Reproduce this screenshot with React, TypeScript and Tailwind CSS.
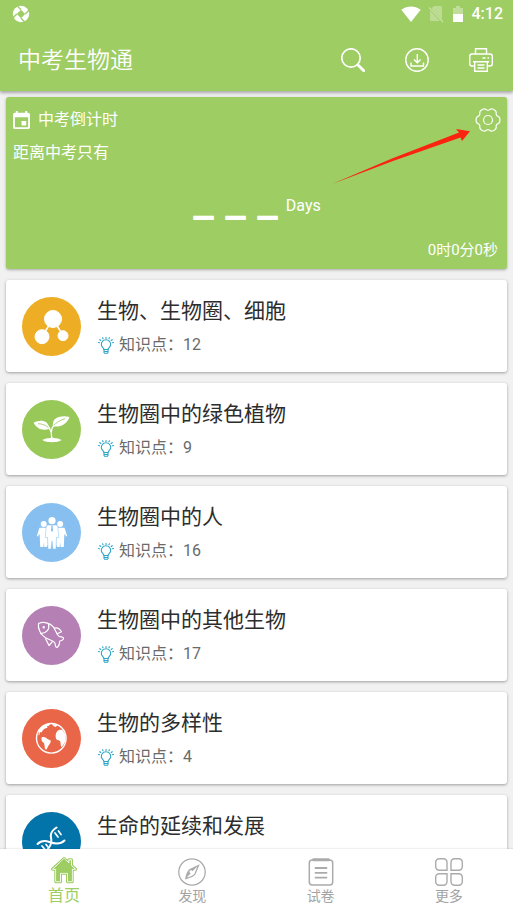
import type { ReactNode } from 'react';
import { MdSignalWifi4Bar } from 'react-icons/md';

type Topic = {
  title: string;
  count?: number;
  color: string;
  art: ReactNode;
};

const topics: Topic[] = [
  {
    title: '生物、生物圈、细胞',
    count: 12,
    color: 'bg-[#edad24]',
    art: (
      <g fill="#fff" stroke="#fff">
        <path d="M31 22 20 39.500M31 22l10 16.500" strokeWidth="1.500" />
        <circle cx="31" cy="22" r="8.500" />
        <circle cx="20" cy="39.700" r="7" />
        <circle cx="41" cy="38.700" r="5" />
      </g>
    ),
  },
  {
    title: '生物圈中的绿色植物',
    count: 9,
    color: 'bg-[#98c858]',
    art: (
      <g fill="#fff">
        <path d="M11.500 22.700C16 20 21.500 20 24.500 22.500c2 1.800 2.300 4 3.800 6C20 31.500 15 28.500 11.500 22.700z" />
        <path d="M47.500 17C42 15.600 35.500 16.500 32.500 19.600 30.700 21.600 31 24 30.800 26.400 39 27.500 45 24 47.500 17z" />
        <path d="M16 23.700c4.500 0 9 1.800 12 5.500M43 18.700c-5 1.500-9 4-12 7.300" fill="none" stroke="#98c858" strokeWidth=".8" />
        <path d="M26.500 27.500c2 1.500 3 3.500 3.200 10.500M32.500 25c-2 1.500-3 4-3 7" fill="none" stroke="#fff" strokeWidth="1.300" />
        <path d="M20.300 40c2-1.300 5-2 8-2l1.500-1 1.800 1c3 0 6 .8 8 2-4 3-15 3-19.300 0z" />
      </g>
    ),
  },
  {
    title: '生物圈中的人',
    count: 16,
    color: 'bg-[#87c0f0]',
    art: (
      <g fill="#fff">
        <circle cx="21.700" cy="21" r="3" />
        <circle cx="38.200" cy="21" r="3" />
        <path d="M17.500 24.700h6.500l.5 8.800 1.300 2V42l-1.200 2h-2.300l-.3-5-.6 5h-3.200l-.5-12-.7-1-1 2.500-1.200-.6z" />
        <path d="M42.500 24.700H36l-.5 8.800-1.300 2V42l1.200 2h2.300l.3-5 .6 5h3.200l.5-12 .7-1 1 2.500 1.200-.6z" />
        <path
          d="M26.300 22h7.400c1.500 0 2 1 2.200 2l.8 10.500h-2.300L34 46h-3l-1-8-1 8h-3l-.4-11.500h-2.300L24.100 24c.2-1 .7-2 2.200-2z"
          stroke="#87c0f0"
          strokeWidth=".5"
        />
        <circle cx="30" cy="17.700" r="3.600" />
        <path d="m29.400 22.500.6-.5.600.5.4 5-1 1.500-1-1.500z" fill="#87c0f0" />
      </g>
    ),
  },
  {
    title: '生物圈中的其他生物',
    count: 17,
    color: 'bg-[#b581b5]',
    art: (
      <g fill="none" stroke="#fff" strokeWidth="1.200" strokeLinejoin="round" strokeLinecap="round">
        <path d="M16.500 17.500c5-2.200 11.500-.7 14.800 3.300 2.200 3 3 6.500 5.200 9 1.400 1.500 4 .7 5 2.200.5 1.500-1.500 2.500-3.500 3-1 .5-.2 1.800-.7 3-.5 1.500-1.500 3.500-2.800 3.300-1.700-.3-.7-3.500-2-5-2.300-2.300-6-2.800-9-4.600-4.600-3-8-9-7-14.200z" />
        <path d="M26.500 18.500c1.500 4.500-2 8.700-7.800 9.200" />
        <path d="M32.500 22c2.500-.7 5.200.5 7 3.800l-4.300 2M23.700 33l3.300 6.500 3.200-3.600" />
        <circle cx="21.700" cy="21.300" r=".6" fill="#fff" />
      </g>
    ),
  },
  {
    title: '生物的多样性',
    count: 4,
    color: 'bg-[#ea6648]',
    art: (
      <g fill="#fff">
        <circle cx="29.300" cy="29.300" r="14.800" fill="none" stroke="#fff" strokeWidth="1.400" />
        <path d="M17 21c2.500-4 6-6 11-6.300l-1 2-2 .6.500 1.500-2.500.7-2 1.500-1.500 2.500-1.500-.5-.7 3-.8.200z" />
        <path d="M19.500 28.500c2-1 4.500-.2 5.500 1.300l3.700 1.700c.5 2.200-1.600 3.700-2.400 5.500l-1.800 3.500-1.500-.5-.8-5.500-2.500-2.500z" />
        <path d="M35 22.500c1.300-1.800 3.500-2.300 5.500-1.500l2.500 4 .5 5.500c-.5 3-2 5.500-4 7.500-1.300-1.500-.5-4-1.500-6-1-1-3.200-.5-4-2.200-.8-2.500-.3-5.500 1-7.300z" />
        <path d="m30 15 4 .6 1.500 1-2 1.400-2.200-1z" />
      </g>
    ),
  },
  {
    title: '生命的延续和发展',
    color: 'bg-[#0374aa]',
    art: (
      <g fill="none" stroke="#fff" strokeWidth="2" strokeLinecap="round">
        <path d="M15.500 32c4-4 8-3.500 12-2 5.500 2 10.500 3 15-1.500" />
        <path d="M34.500 15.500c-4.500 3-6.500 6-5.500 10 .8 4 .5 8.500-4.500 13" />
        <path d="m33 21 3 4M36.500 19l2.500 3.500M20 34l3.500 4M24 32.500l2 2.500" strokeWidth="1.700" />
      </g>
    ),
  },
];

// six soft lobes around the centre
const gearPath =
  Array.from({ length: 90 }, (_, i) => {
    const a = (i * Math.PI) / 45;
    const r = 11.1 + 1.1 * Math.cos(6 * a) - 0.3 * Math.cos(12 * a);
    return `${i ? 'L' : 'M'}${(13 + r * Math.cos(a)).toFixed(2)} ${(13 + r * Math.sin(a)).toFixed(2)}`;
  }).join('') + 'z';

function StatusBar() {
  return (
    <div className="flex h-7 items-center justify-between pr-[10px] pl-3">
      <svg viewBox="0 0 18 18" className="size-[18px]">
        <circle cx="9" cy="9" r="8.200" fill="#fff" />
        <path d="M9 4.800 13.200 9 9 13.200 4.800 9z" fill="#9ecd64" />
        <path
          d="M9 4.800 4.500.300M13.200 9l4.500-4.500M9 13.200l4.500 4.500M4.800 9 .300 13.500"
          fill="none"
          stroke="#9ecd64"
          strokeWidth="1.400"
        />
      </svg>
      <div className="flex items-center gap-[7px] text-white">
        <MdSignalWifi4Bar className="size-5" />
        <svg viewBox="0 0 16 18" className="h-[18px] w-4">
          <path d="M6 1h7a1 1 0 0 1 1 1v14H2V5z" fill="#fff" opacity=".3" />
          <path d="m.500 2 14 15" stroke="#9ecd64" strokeWidth="2.500" />
          <path d="m1 2.500 14 14.500" stroke="#fff" strokeWidth="1.200" opacity=".4" />
        </svg>
        <svg viewBox="0 0 12 18" className="mx-px h-[18px] w-3">
          <path d="M4 1h4v2h3v6H1V3h3z" fill="#fff" opacity=".35" />
          <path d="M1 9h10v8H1z" fill="#fff" />
        </svg>
        <span className="text-base leading-5 font-medium">4:12</span>
      </div>
    </div>
  );
}

function Header() {
  return (
    <header className="relative z-10 bg-[#9ecd64] shadow-[0_2px_3px_rgba(0,0,0,0.3)]">
      <StatusBar />
      <div className="flex h-[63px] items-center pr-5 pl-[18px]">
        <h1 className="flex-1 pt-0.5 text-[23px] leading-8 font-[350] text-white">中考生物通</h1>
        <div className="flex gap-10">
          <button aria-label="搜索">
            <svg viewBox="0 0 24 24" className="size-6" fill="none" stroke="#fff">
              <circle cx="10" cy="10" r="9.200" strokeWidth="1.700" />
              <path d="m17 17 5.800 5.800" strokeWidth="2.800" strokeLinecap="round" />
            </svg>
          </button>
          <button aria-label="下载">
            <svg viewBox="0 0 24 24" className="size-6" fill="none" stroke="#fff" strokeWidth="1.400">
              <circle cx="12" cy="12" r="11.200" />
              <path d="M12.300 6v8.500M9 11.500l3.300 3.200 3.300-3.200M6 14.500V18h12.500v-3.500" />
            </svg>
          </button>
          <button aria-label="打印">
            <svg viewBox="0 0 24 24" className="size-6" fill="none" stroke="#fff" strokeWidth="1.400">
              <path d="M6.500 6V.8h11V6" />
              <path d="M5 18H3a2.300 2.300 0 0 1-2.200-2.300V8.300A2.300 2.300 0 0 1 3 6h18a2.300 2.300 0 0 1 2.300 2.300v7.400A2.300 2.300 0 0 1 21 18h-2" />
              <path d="M4 13.700h16M5.700 13.700v9.500h12.600v-9.500M8.500 17h7M8.500 20h7M13.500 10h3M18.500 10h1.500" />
            </svg>
          </button>
        </div>
      </div>
    </header>
  );
}

function Countdown() {
  return (
    <section className="relative flex h-[172px] shrink-0 flex-col rounded-[3px] bg-[#9ecd64] pt-[11px] pr-[6px] pb-[7px] pl-[7px] text-base leading-6 text-white shadow-[0_1px_3px_rgba(0,0,0,0.3)]">
      <div className="flex h-6 items-center gap-2">
        <svg viewBox="3 1 18 20" className="h-[18px] w-[17px]" fill="#fff" preserveAspectRatio="none">
          <path d="M17 12h-5v5h5v-5zM16 1v2H8V1H6v2H5a2 2 0 0 0-2 2v14c0 1.100.9 2 2 2h14c1.100 0 2-.9 2-2V5a2 2 0 0 0-2-2h-1V1h-2zm3 18H5V8h14v11z" />
        </svg>
        <h2 className="flex-1">中考倒计时</h2>
        <button aria-label="设置">
          <svg viewBox="0 0 26 26" className="size-[26px]" fill="none" stroke="#fff" strokeWidth="1.200">
            <path d={gearPath} />
            <circle cx="13" cy="13" r="4.500" />
          </svg>
        </button>
      </div>
      <p className="mt-[9px]">距离中考只有</p>
      <div className="flex flex-1 items-center justify-center gap-2 pb-[3px]">
        <span className="text-[46px] leading-[56px] font-medium">_ _ _</span>
        <span className="mt-3">Days</span>
      </div>
      <p className="pr-[3px] text-right text-[15px]">0时0分0秒</p>
      <svg viewBox="0 0 138 56" className="absolute top-[31px] right-[37px] h-14 w-[138px]" fill="#fb2410">
        <path d="M0 56 60 30.500 127 4.500 124 1l14 2.200L130 13l-1.500-3.500L61 33z" />
      </svg>
    </section>
  );
}

function Bulb() {
  return (
    <svg viewBox="-1 0 17 17" className="size-[17px]" fill="none" stroke="#2ba5c6" strokeWidth="1.100" strokeLinecap="round">
      <path d="M6 12.500c0-1.700-2.700-2.400-2.700-5a4.700 4.700 0 0 1 9.400 0c0 2.600-2.700 3.300-2.700 5z" />
      <path d="M6 14.500h4M6.500 16.300h3M6 12.500v3M10 12.500v3" />
      <path d="M8 .5v1M4.500.8l.6 1M11.500.8l-.6 1M1.800 2.700l1 .8M14.200 2.700l-1 .8M.5 5.500l1 .3M15.500 5.500l-1 .3" />
    </svg>
  );
}

function TopicCard({ topic }: { topic: Topic }) {
  return (
    <li>
      <a
        href="#"
        className="flex h-[92px] items-start gap-4 rounded-[3px] bg-white px-4 pt-[17px] shadow-[0_1px_3px_rgba(0,0,0,0.35)]"
      >
        <div className={`size-[59px] shrink-0 rounded-full ${topic.color}`}>
          <svg viewBox="0 0 59 59" className="size-full">
            {topic.art}
          </svg>
        </div>
        <div>
          <h3 className="text-[21px] leading-7 text-[#2d2d2d]">{topic.title}</h3>
          {topic.count !== undefined && (
            <p className="mt-2 flex items-center gap-[5px] text-base leading-6 text-[#6a6a6a]">
              <Bulb />
              知识点：{topic.count}
            </p>
          )}
        </div>
      </a>
    </li>
  );
}

const tabs = [
  {
    label: '首页',
    active: true,
    icon: (
      <g transform="translate(0 -2)" fill="#9ecd64" strokeLinejoin="round">
        <path
          d="M14 2.500 2.500 13.200h3.300v12.500h4.700v-8.500h7v8.500h4.700V13.200h3.300l-4-3.700V3.800h-2.700v3z"
          stroke="#9ecd64"
          strokeWidth="3"
        />
        <path
          d="M14 2.500 2.500 13.200h3.300v12.500h4.700v-8.500h7v8.500h4.700V13.200h3.300l-4-3.700V3.800h-2.700v3z"
          stroke="#fff"
          strokeWidth="1"
        />
        <path d="M14 2.800 3.700 12.800h2.500v12.500h3.900v-8.500h7.800v8.500h3.900V12.800h2.500z" />
      </g>
    ),
  },
  {
    label: '发现',
    icon: (
      <g fill="none" stroke="#ababab" strokeWidth="1.300">
        <circle cx="14" cy="14" r="13.200" />
        <path d="M20.500 7.500 17 16c-1 1.500-5 3.500-9.200 4.500C8.500 16.500 10.500 12.500 12 11.500z" />
        <path d="M20.500 7.500 12 11.500c-1.500 1-3.500 5-4.200 9l5-5.300a1.500 1.500 0 1 1 1.500-2z" fill="#ababab" stroke="none" />
      </g>
    ),
  },
  {
    label: '试卷',
    icon: (
      <g fill="none" stroke="#ababab" strokeWidth="1.500">
        <rect x="2.300" y="2" width="23.400" height="25" rx="3" />
        <path d="M6.500 1.700h15" strokeWidth="3" strokeLinecap="round" />
        <path d="M8.500 10h11M8.500 14.800h11M8.500 19.600h11" strokeWidth="1.800" strokeLinecap="round" />
      </g>
    ),
  },
  {
    label: '更多',
    icon: (
      <g fill="none" stroke="#ababab" strokeWidth="1.400">
        <path d="M4.200.8h4.300a3.500 3.500 0 0 1 3.500 3.500v8H4.200A3.500 3.500 0 0 1 .7 8.800V4.300A3.500 3.500 0 0 1 4.200.8z" />
        <path d="M23.800.8h-4.300A3.500 3.500 0 0 0 16 4.300v8h7.800a3.500 3.500 0 0 0 3.500-3.500V4.300A3.500 3.500 0 0 0 23.800.8z" />
        <path d="M4.200 27.300h4.300a3.500 3.500 0 0 0 3.500-3.500v-8H4.200a3.500 3.500 0 0 0-3.500 3.500v4.500a3.500 3.500 0 0 0 3.500 3.500z" />
        <path d="M23.800 27.300h-4.300a3.500 3.500 0 0 1-3.500-3.500v-8h7.800a3.500 3.500 0 0 1 3.500 3.500v4.500a3.500 3.500 0 0 1-3.500 3.500z" />
      </g>
    ),
  },
];

export default function App() {
  return (
    <div className="flex h-screen flex-col bg-[#f1f1f1] font-['Roboto','Noto_Sans_CJK_SC',sans-serif]">
      <Header />
      <main className="flex min-h-0 flex-1 flex-col gap-[11px] overflow-y-auto px-[6px] pt-[6px] [scrollbar-width:none]">
        <Countdown />
        <ul className="flex flex-col gap-[11px]">
          {topics.map((topic) => (
            <TopicCard key={topic.title} topic={topic} />
          ))}
        </ul>
      </main>
      <nav className="relative grid h-16 shrink-0 grid-cols-4 bg-white shadow-[0_-1px_1px_rgba(0,0,0,0.06)]">
        {tabs.map((tab) => (
          <a
            key={tab.label}
            href="#"
            className={`flex flex-col items-center pt-[9px] leading-5 ${tab.active ? 'text-base text-[#9ecd64]' : 'text-sm text-[#a3a3a3]'}`}
          >
            <svg viewBox="0 0 28 28" className="size-7 overflow-visible">
              {tab.icon}
            </svg>
            {tab.label}
          </a>
        ))}
      </nav>
    </div>
  );
}
